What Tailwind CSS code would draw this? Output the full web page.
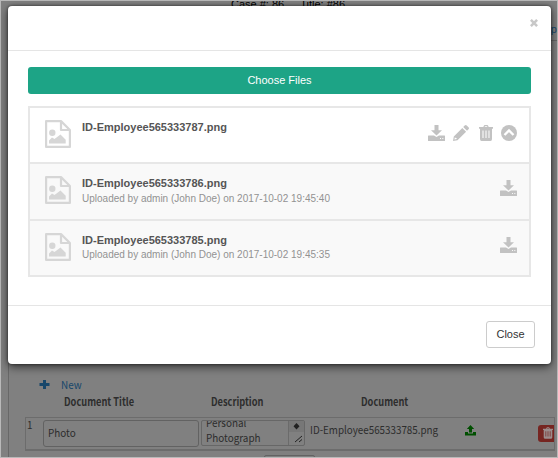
<!DOCTYPE html>
<html lang="en">
<head>
<meta charset="utf-8">
<title>Documents</title>
<script src="https://cdn.jsdelivr.net/npm/@tailwindcss/browser@4"></script>
</head>
<body class="w-[558px] h-[458px] overflow-hidden bg-[#808080]">
<svg class="hidden">
  <symbol id="download" viewBox="0 0 17 16"><path d="M6.500 0h4v5.200H14L8.500 10.600 3 5.200h3.500z"/><path fill-rule="evenodd" d="M.5 10.500H6l2.500 1.600 2.500-1.600h5.500q.5 0 .5.500v4.500q0 .5-.5.500H.5q-.5 0-.5-.5V11q0-.5.5-.5zM12 13v1h1V13zm2.300 0v1h1V13z"/></symbol>
  <symbol id="trash" viewBox="0 0 14 16"><path fill-rule="evenodd" d="M4.300 2 5 .5Q5.200 0 5.700 0h2.600q.5 0 .7.5L9.700 2H14v1.700h-1V14q0 2-1.500 2h-9Q1 16 1 14V3.700H0V2zM5.600 2h2.800L8 1.200H6zM3.500 5.500V13h1V5.500zm3 0V13h1V5.500zm3 0V13h1V5.500z"/></symbol>
  <symbol id="image" viewBox="0 0 26 28"><path fill="none" stroke="currentColor" stroke-width="2.200" stroke-linejoin="round" d="M1.100 1.100h14.900l8.900 8.900v16.900H1.100zM16 1.100v8.900h8.900"/><circle cx="7.300" cy="12.800" r="3.200"/><path d="M4 23.600v-3l3-3 2.500 1.500 6-4.500 5.200 5.200v3.800z"/></symbol>
</svg>

<!-- page behind the dialog -->
<div class="relative w-full h-full flex flex-col border border-[#b9b9b9] text-[#2d2d2d] overflow-hidden">
  <div class="shrink-0 flex justify-center gap-4 h-[17px] text-[11px] leading-[7px] pl-[19px] pr-px text-black font-['Liberation_Sans',sans-serif]"><span>Case #: 86</span><span>Title: #86</span></div>
  <div class="shrink-0 h-[23px] ml-[7px] border-b border-[#676767] flex justify-end text-[11px] leading-[22px] text-[#17476b] font-['Liberation_Sans',sans-serif]"><span>Map</span></div>
  <div class="shrink-0 h-[420px] ml-[7px] border-l border-[#686868] pt-[334px] font-['Noto_Sans_CJK_SC',sans-serif] text-[11px]">
    <div class="flex items-center h-[18px] pl-[30px] gap-[11px] text-[#17476b]">
      <svg class="w-[11px] h-[11px]" viewBox="0 0 11 11"><path fill="currentColor" d="M4 1h3v3h3.500v3H7v3H4V7H.5V4H4z"/></svg>
      <span class="origin-left scale-x-90">New</span>
    </div>
    <div class="flex h-[17px] leading-[16px] font-bold pl-[55px]"><span class="w-[147px] origin-left scale-x-84">Document Title</span><span class="w-[150px] origin-left scale-x-84">Description</span><span class="origin-left scale-x-84">Document</span></div>
    <div class="mt-[7px] ml-4 w-[530px] h-[34px] flex border border-b-2 border-[#6c6c6c] overflow-hidden">
      <span class="w-[17px] shrink-0 pl-px leading-[12px]"><span class="inline-block origin-left scale-x-90">1</span></span>
      <div class="mt-[2px] w-[156px] h-[27px] shrink-0 border border-[#626262] rounded-[3px] pl-1 leading-[22px]"><span class="inline-block origin-left scale-x-90">Photo</span></div>
      <div class="mt-[2px] ml-[2px] w-[104px] h-[26px] shrink-0 flex border border-[#676767] rounded-[2px] overflow-hidden">
        <div class="w-[87px] pl-1 leading-[15px] border-r border-[#6b6b6b]"><div class="-mt-[6px] origin-left scale-x-90">Personal<br>Photograph</div></div>
        <svg class="w-[15px] h-[24px]" viewBox="0 0 15 24"><path fill="#777" d="M0 0h15v11H0z"/><path fill="#222" d="m7.500 2 3 3.200-3 3.300-3-3.300z"/><path stroke="#222" d="m6 21 7-6M10 21l3-2.500"/></svg>
      </div>
      <span class="ml-[5px] w-[155px] shrink-0 leading-[22px] whitespace-nowrap"><span class="inline-block origin-left scale-x-[.893]">ID-Employee565333785.png</span></span>
      <svg class="mt-[7px] w-[11px] h-[11px] shrink-0 text-[#004f00]" viewBox="0 0 11 11"><path fill="currentColor" d="M5.500 0 9.200 4H7v3.500H4V4H1.800zM0 7h3v1.500h5V7h3v3.500H0z"/></svg>
      <div class="ml-[62px] mt-[7px] w-[24px] h-[17px] shrink-0 bg-[#762521] rounded-[3px] pl-[5px] pt-[2px]"><svg class="w-[10px] h-[12px] fill-[#9b8c8c]"><use href="#trash"/></svg></div>
    </div>
    <div class="mt-[4px] ml-[255px] w-[51px] h-4 border border-[#626262] rounded-[2px]"></div>
  </div>
</div>

<!-- dialog -->
<div class="absolute left-[8px] top-[6px] w-[543px] h-[358px] bg-white rounded-[4px] shadow-[0_3px_10px_rgba(0,0,0,0.6),0_0_3px_rgba(0,0,0,0.6)] flex flex-col font-['Liberation_Sans',sans-serif] text-[11px]">
  <div class="h-[45px] shrink-0 border-b border-[#e5e5e5] flex justify-end pr-[13px] pt-[13px]">
    <svg class="w-[8px] h-[8px]" viewBox="0 0 9 9"><path stroke="#c8c8c8" stroke-width="2.900" d="m1 1 7 7M8 1 1 8"/></svg>
  </div>
  <div class="h-[254px] shrink-0 px-5 pt-4">
    <button class="block w-full h-[27px] bg-[#1da486] rounded-[3px] text-white leading-[27px]">Choose Files</button>
    <div class="mt-3 h-[171px] border-2 border-[#e7e7e7] divide-y-2 divide-[#e7e7e7] text-[#555]">
      <div class="h-[56px] flex pl-[15px] pr-[12px]">
        <svg class="mt-[12px] w-[26px] h-[28px] fill-[#d6d6d6] text-[#d6d6d6] shrink-0"><use href="#image"/></svg>
        <div class="ml-[11px] pt-[12px] flex-1 font-bold leading-[14px]">ID-Employee565333787.png</div>
        <div class="flex fill-[#c2c2c2] pt-[17px]">
          <svg class="w-[17px] h-[16px]"><use href="#download"/></svg>
          <svg class="ml-[8px] w-[16px] h-[16px]" viewBox="0 0 16 16"><path fill-rule="evenodd" d="M9.300 2.900 13.100 6.700 4.500 15.200 0 16 .8 11.500zM1.900 12.300l-.5 2.300 2.300-.5-.2-1.200-1.300-.2z"/><path d="m10.200 2 1.500-1.500q1-1 2 0l1.800 1.800q1 1 0 2L14 5.800z"/></svg>
          <svg class="ml-[10px] w-[14px] h-[16px]"><use href="#trash"/></svg>
          <svg class="ml-[8px] w-[16px] h-[16px]" viewBox="0 0 16 16"><circle cx="8" cy="8" r="8"/><path fill="none" stroke="#fff" stroke-width="2.400" d="m3.500 10 4.500-4.500 4.500 4.500"/></svg>
        </div>
      </div>
      <div class="h-[57px] flex pl-[15px] pr-[12px] bg-[#f9f9f9]">
        <svg class="mt-[12px] w-[26px] h-[28px] fill-[#d6d6d6] text-[#d6d6d6] shrink-0"><use href="#image"/></svg>
        <div class="ml-[11px] pt-[12px] flex-1"><div class="font-bold leading-[14px]">ID-Employee565333786.png</div><div class="text-[10px] leading-[17px] text-[#929292]">Uploaded by admin (John Doe) on 2017-10-02 19:45:40</div></div>
        <svg class="mt-[16px] w-[17px] h-[16px] fill-[#c2c2c2]"><use href="#download"/></svg>
      </div>
      <div class="h-[54px] flex pl-[15px] pr-[12px] bg-[#f9f9f9]">
        <svg class="mt-[12px] w-[26px] h-[28px] fill-[#d6d6d6] text-[#d6d6d6] shrink-0"><use href="#image"/></svg>
        <div class="ml-[11px] pt-[12px] flex-1"><div class="font-bold leading-[14px]">ID-Employee565333785.png</div><div class="text-[10px] leading-4 text-[#929292]">Uploaded by admin (John Doe) on 2017-10-02 19:45:35</div></div>
        <svg class="mt-[16px] w-[17px] h-[16px] fill-[#c2c2c2]"><use href="#download"/></svg>
      </div>
    </div>
  </div>
  <div class="flex-1 border-t border-[#e5e5e5] flex justify-end pr-4 pt-[15px]">
    <button class="w-[49px] h-[27px] border border-[#ccc] rounded-[3px] text-[#333]">Close</button>
  </div>
</div>
</body>
</html>
